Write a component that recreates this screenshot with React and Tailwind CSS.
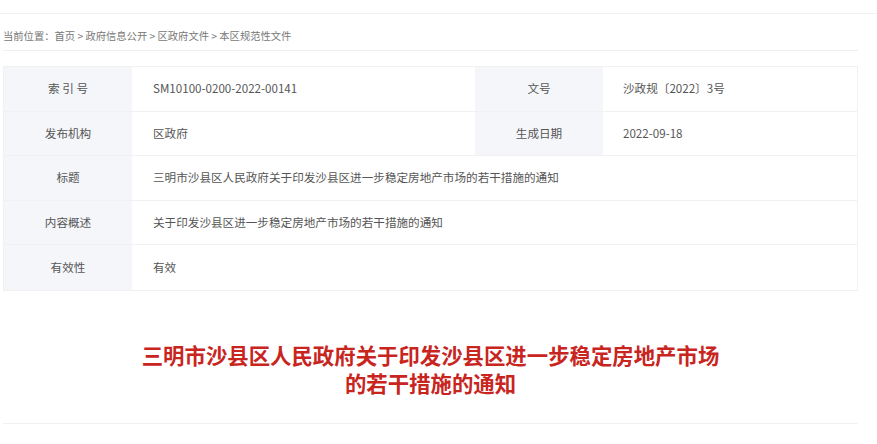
const rows = [
  { type: 'split', l1: '索 引 号', v1: 'SM10100-0200-2022-00141', l2: '文号', v2: '沙政规〔2022〕3号' },
  { type: 'split', l1: '发布机构', v1: '区政府', l2: '生成日期', v2: '2022-09-18' },
  { type: 'full', l1: '标题', v1: '三明市沙县区人民政府关于印发沙县区进一步稳定房地产市场的若干措施的通知' },
  { type: 'full', l1: '内容概述', v1: '关于印发沙县区进一步稳定房地产市场的若干措施的通知' },
  { type: 'full', l1: '有效性', v1: '有效' },
]

const App = () => {
  return (
    <div
      className="min-h-[444px] w-[877px] bg-white"
      style={{ fontFamily: '"Noto Sans CJK SC", "Noto Sans", sans-serif' }}
    >
      <div className="h-[14px] border-b border-[#f2f2f2]" />
      <div className="w-[855px] ml-[3px]">
        <div className="h-[37px] pt-[15px] leading-[14px] text-[10.3px] text-[#777] border-b border-[#eeeeee] whitespace-nowrap">
          当前位置：首页 &gt; 政府信息公开 &gt; 区政府文件 &gt; 本区规范性文件
        </div>

        <div className="mt-[15px] border border-[#f1f1f1] text-[11.6px] text-[#555]">
          {rows.map((row, idx) => (
            <div
              key={idx}
              className={`flex h-[44.6px] ${idx < rows.length - 1 ? 'border-b border-[#f1f1f1]' : ''}`}
            >
              <div className="w-[128px] shrink-0 bg-[#f4f6fa] flex items-center justify-center">
                {row.l1}
              </div>
              {row.type === 'split' ? (
                <>
                  <div className="w-[343px] shrink-0 flex items-center pl-[21px]">{row.v1}</div>
                  <div className="w-[128px] shrink-0 bg-[#f4f6fa] flex items-center justify-center">
                    {row.l2}
                  </div>
                  <div className="flex-1 flex items-center pl-[20px]">{row.v2}</div>
                </>
              ) : (
                <div className="flex-1 flex items-center pl-[21px]">{row.v1}</div>
              )}
            </div>
          ))}
        </div>

        <div className="mt-[50px] pb-[26px] border-b border-[#f2f2f2] text-center">
          <h1 className="text-[21.4px] leading-[28px] font-bold text-[#c8251f]">
            三明市沙县区人民政府关于印发沙县区进一步稳定房地产市场
            <br />
            的若干措施的通知
          </h1>
        </div>
      </div>
    </div>
  )
}

export default App
